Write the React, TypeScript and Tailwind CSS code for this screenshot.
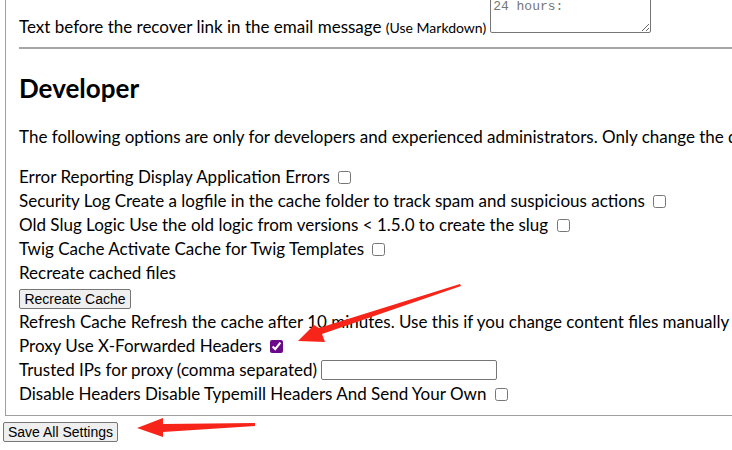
import React from 'react';

const rows = [
  { label: 'Error Reporting Display Application Errors', checked: false },
  { label: 'Security Log Create a logfile in the cache folder to track spam and suspicious actions', checked: false },
  { label: 'Old Slug Logic Use the old logic from versions < 1.5.0 to create the slug', checked: false },
  { label: 'Twig Cache Activate Cache for Twig Templates', checked: false },
];

function Check({ checked = false }: { checked?: boolean }) {
  return (
    <input
      type="checkbox"
      defaultChecked={checked}
      className="ml-[4px] mr-[3px] h-[13px] w-[13px] align-[-1px] accent-[#6a0a88]"
    />
  );
}

function Arrows() {
  return (
    <svg className="pointer-events-none absolute left-0 top-0" width="732" height="450">
      {/* arrow to proxy checkbox */}
      <polygon points="460,284 461,286 322,334 325,342 298,341 314,325 319,328" fill="#f7241a" />
      {/* arrow to save button */}
      <polygon points="255,423 255,426 163,432 163,437 137,428 163,418 163,424" fill="#f7241a" />
    </svg>
  );
}

export default function App() {
  return (
    <div
      className="relative h-[450px] w-[732px] overflow-hidden bg-white text-black"
      style={{ fontFamily: 'Lato, "Noto Sans", sans-serif' }}
    >
      <div className="ml-[5px] w-[900px] border-x border-b border-[#a0a0a0] pb-[9px] pl-[13px] pr-4">
        <div className="-mt-[3px] flex h-[43px] items-end">
          <span className="text-[17px] leading-6">
            Text before the recover link in the email message{' '}
            <span className="text-[14px]">(Use Markdown)</span>
          </span>
          <textarea
            defaultValue="24 hours:"
            className="mb-[7px] ml-[4px] h-[36px] w-[161px] rounded-[2px] border border-[#767676] px-[2px] py-[1px] text-[13px] leading-[15px] text-[#767676]"
            style={{ fontFamily: '"Liberation Mono", monospace' }}
          />
        </div>
        <hr className="mt-[7px] border-t-2 border-[#a6a6a6]" />
        <h2 className="mt-[23px] text-[26px] font-bold leading-[32px]">Developer</h2>
        <p className="mt-[21px] whitespace-nowrap text-[17px] leading-6">
          The following options are only for developers and experienced administrators. Only change the default settings if you know what you do.
        </p>
        <div className="mt-[16px] text-[17px] leading-6">
          {rows.map((r) => (
            <div key={r.label} className="h-6 whitespace-nowrap">
              {r.label} <Check checked={r.checked} />
            </div>
          ))}
          <div className="h-6">Recreate cached files</div>
          <div className="h-[25px] pt-[4px]">
            <button
              className="block h-[20px] w-[112px] rounded-[2px] border border-[#767676] bg-[#efefef] text-[14px] leading-[18px]"
              style={{ fontFamily: '"Liberation Sans", Arial, sans-serif' }}
            >
              Recreate Cache
            </button>
          </div>
          <div className="h-6 whitespace-nowrap">
            Refresh Cache Refresh the cache after 10 minutes. Use this if you change content files manually e.g. with FTP <Check />
          </div>
          <div className="h-6 whitespace-nowrap">
            Proxy Use X-Forwarded Headers <Check checked />
          </div>
          <div className="flex h-6 items-center whitespace-nowrap">
            <span>Trusted IPs for proxy (comma separated)</span>
            <input
              type="text"
              className="ml-[4px] h-[20px] w-[176px] rounded-[2px] border border-[#767676]"
            />
          </div>
          <div className="h-6 whitespace-nowrap">
            Disable Headers Disable Typemill Headers And Send Your Own <Check />
          </div>
        </div>
      </div>
      <button
        className="ml-[3px] mt-[6px] block h-[20px] w-[115px] rounded-[2px] border border-[#767676] bg-[#efefef] text-[14px] leading-[18px]"
        style={{ fontFamily: '"Liberation Sans", Arial, sans-serif' }}
      >
        Save All Settings
      </button>
      <Arrows />
    </div>
  );
}
